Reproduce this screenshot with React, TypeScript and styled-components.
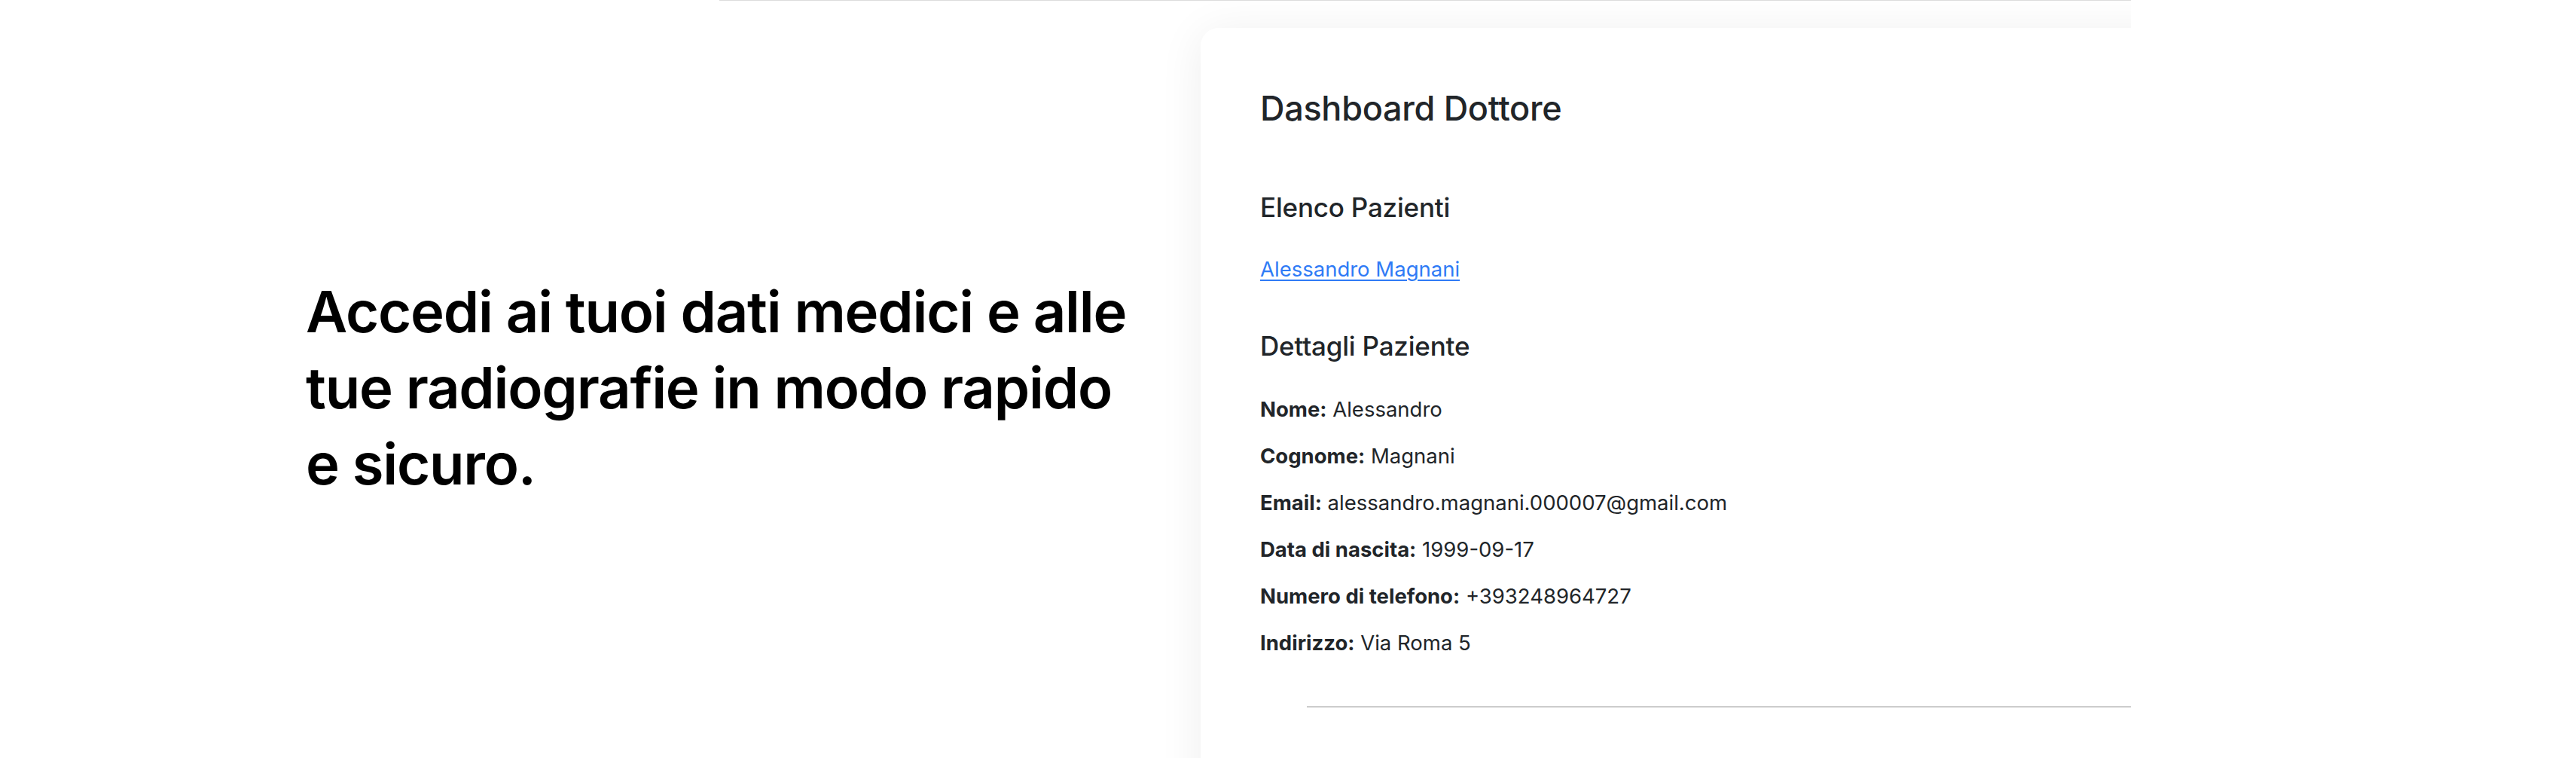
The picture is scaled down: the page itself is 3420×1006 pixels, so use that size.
import React from "react";
import styled, { createGlobalStyle } from "styled-components";

const GlobalStyle = createGlobalStyle`
  html, body {
    margin: 0;
    padding: 0;
    background: #ffffff;
  }
  body {
    font-family: "Inter", "Liberation Sans", sans-serif;
    color: #212529;
    -webkit-font-smoothing: antialiased;
  }
  * { box-sizing: border-box; }
`;

const Page = styled.div`
  width: 3420px;
  height: 1006px;
  overflow: hidden;
`;

const TopRule = styled.div`
  margin-left: 955px;
  width: 1874px;
  height: 1px;
  background: #dcdcdc;
`;

const Main = styled.main`
  width: 2829px;
  height: 1005px;
  overflow: hidden;
  display: grid;
  grid-template-columns: 1594px 1600px;
  align-items: start;
`;

const Intro = styled.section`
  padding: 362px 0 0 406px;
`;

const Headline = styled.h1`
  margin: 0;
  font-size: 76px;
  line-height: 101px;
  font-weight: 600;
  letter-spacing: -1.2px;
  color: #000000;
  white-space: nowrap;
`;

const CardColumn = styled.section`
  padding-top: 36px;
`;

const Card = styled.div`
  background: #ffffff;
  border-radius: 24px;
  box-shadow: 0 6px 60px rgba(0, 0, 0, 0.07);
  padding: 80px 80px 200px 79px;
  min-height: 1200px;
`;

const Title = styled.h2`
  margin: 0;
  font-size: 45px;
  line-height: 54px;
  font-weight: 500;
  letter-spacing: -0.3px;
  color: #212529;
`;

const SectionTitle = styled.h3<{ $gap: number }>`
  margin: ${(p) => p.$gap}px 0 0;
  font-size: 35px;
  line-height: 44px;
  font-weight: 500;
  letter-spacing: -0.2px;
  color: #212529;
`;

const PatientList = styled.ul`
  list-style: none;
  margin: 39px 0 0;
  padding: 0;
`;

const PatientLink = styled.a`
  font-size: 27.5px;
  line-height: 42px;
  color: #2f7bf6;
  text-decoration: underline;
  text-underline-offset: 4px;
  text-decoration-thickness: 2px;
`;

const Details = styled.div`
  margin-top: 41px;
  display: flex;
  flex-direction: column;
  gap: 20px;
`;

const Field = styled.p`
  margin: 0;
  font-size: 27.5px;
  line-height: 42px;
  color: #212529;
`;

const Label = styled.strong`
  font-weight: 700;
`;

const Divider = styled.hr`
  margin: 63px 0 0 62px;
  border: none;
  height: 2px;
  background: #cccccc;
`;

const fields: [string, string][] = [
  ["Nome:", "Alessandro"],
  ["Cognome:", "Magnani"],
  ["Email:", "alessandro.magnani.000007@gmail.com"],
  ["Data di nascita:", "1999-09-17"],
  ["Numero di telefono:", "+393248964727"],
  ["Indirizzo:", "Via Roma 5"],
];

export default function App() {
  return (
    <>
      <GlobalStyle />
      <Page>
        <TopRule />
        <Main>
          <Intro>
            <Headline>
              Accedi ai tuoi dati medici e alle
              <br />
              tue radiografie in modo rapido
              <br />e sicuro.
            </Headline>
          </Intro>
          <CardColumn>
            <Card>
              <Title>Dashboard Dottore</Title>
              <SectionTitle $gap={82}>Elenco Pazienti</SectionTitle>
              <PatientList>
                <li>
                  <PatientLink href="#">Alessandro Magnani</PatientLink>
                </li>
              </PatientList>
              <SectionTitle $gap={59}>Dettagli Paziente</SectionTitle>
              <Details>
                {fields.map(([label, value]) => (
                  <Field key={label}>
                    <Label>{label}</Label> {value}
                  </Field>
                ))}
              </Details>
              <Divider />
            </Card>
          </CardColumn>
        </Main>
      </Page>
    </>
  );
}
